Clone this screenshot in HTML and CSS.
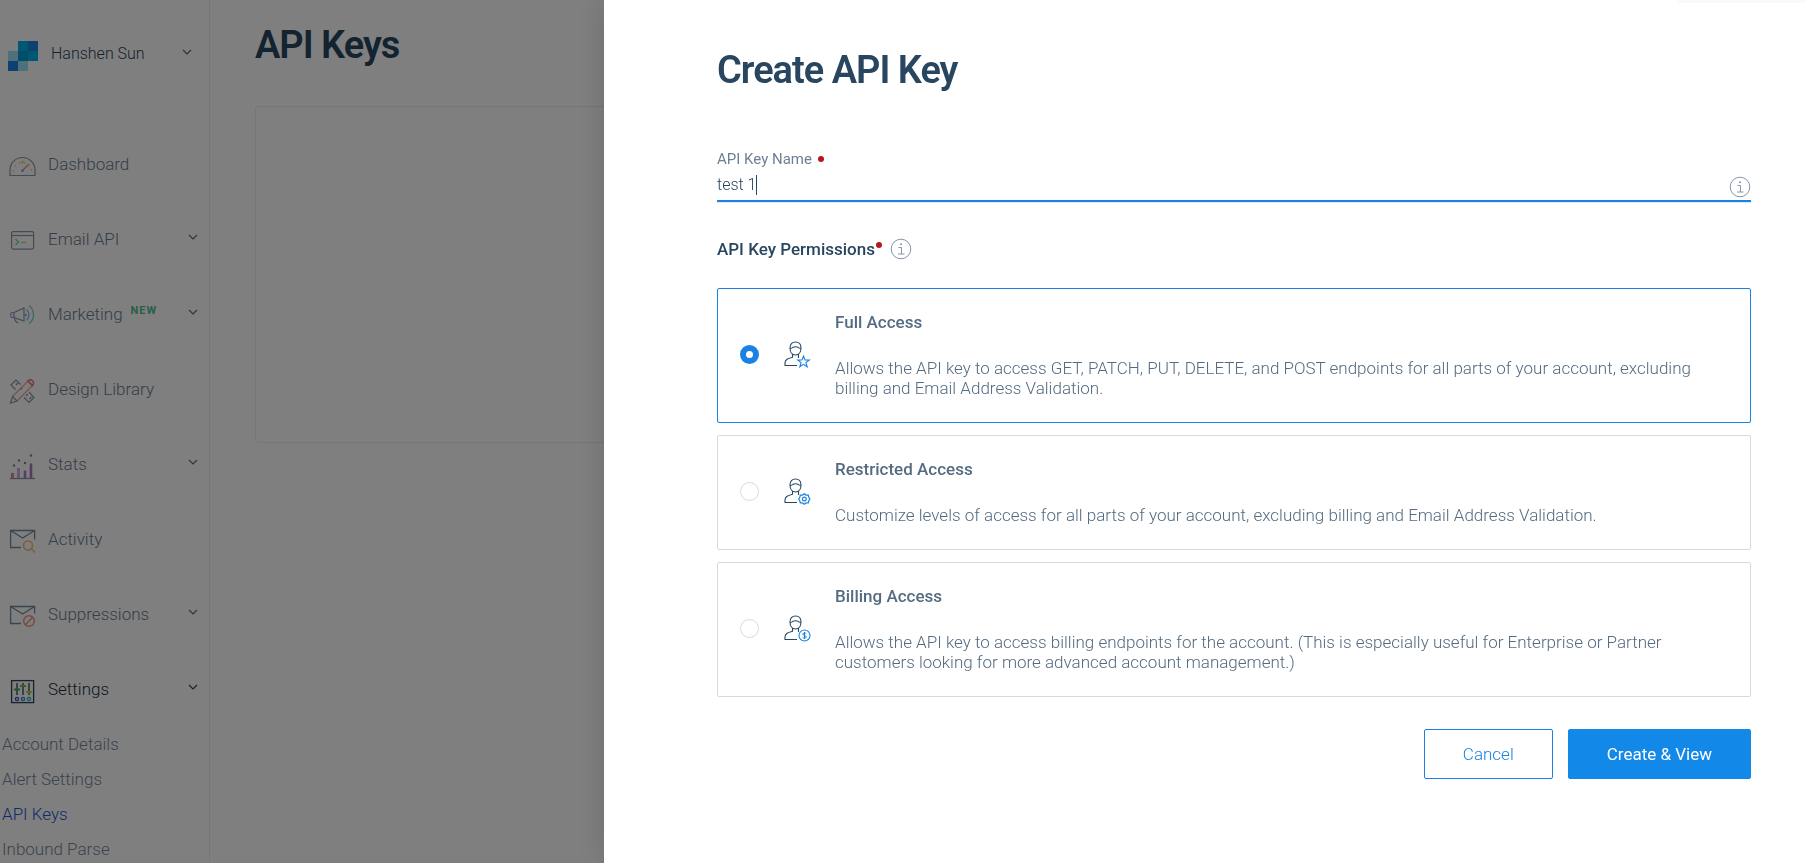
FILE: index.html
```html
<!DOCTYPE html>
<html lang="en">
<head>
<meta charset="utf-8">
<meta name="viewport" content="width=device-width, initial-scale=1">
<title>API Keys</title>
<link rel="stylesheet" href="styles.css">
</head>
<body>
<svg class="defs" width="0" height="0" aria-hidden="true">
  <symbol id="chevron" viewBox="0 0 10 6"><path d="M1 1l4 4 4-4" fill="none" stroke="currentColor" stroke-width="1.200"/></symbol>
  <symbol id="info" viewBox="0 0 22 22"><g fill="none" stroke="currentColor"><circle cx="11" cy="11" r="9.800"/><path d="M8.500 9.500h3v6.500M8 16h6.500"/></g><rect x="10" y="5.500" width="2" height="1.500" fill="currentColor"/></symbol>
  <symbol id="user" viewBox="0 0 27 27"><g fill="none" stroke="#294661" stroke-width="1.100"><path d="M6 7c0-3.800 2-6 5.500-6S17 3.200 17 7s-2 7-5.500 7S6 10.800 6 7z"/><path d="M6 7.500c1.500 0 2.500-.5 3-1.200 1.500-.6 3.500-.6 5 0 .5.7 1.500 1.200 3 1.200"/><path d="M8.500 13v3.200c-4.500 1.300-7.500 2.300-7.500 5.800v2.500h12M14.500 13v4"/></g></symbol>
</svg>

<div class="app">
  <nav class="sidebar" aria-label="Main">
    <button class="account" type="button">
      <svg class="logo" viewBox="0 0 30 30" aria-hidden="true"><path fill="#9de1f3" d="M0 10h10v10H0zM10 20h10v10H10z"/><path fill="#1a82e2" d="M0 20h10v10H0zM20 0h10v10H20z"/><path fill="#00b2e3" d="M10 0h10v10H10zM20 10h10v10H20z"/><path fill="#009dd9" d="M10 10h10v10H10z"/></svg>
      <span class="account-name">Hanshen Sun</span>
      <svg class="chevron"><use href="#chevron"/></svg>
    </button>
    <ul class="menu">
      <li><a class="item" href="#dashboard">
        <svg class="icon" viewBox="0 0 28 28"><g fill="none" stroke="#546b81" stroke-width="1.200"><path d="M2 23.500V18a12.500 12.500 0 0 1 25 0v5.500z"/><path stroke="#e8614f" d="M15 18l6-6"/><path stroke="#e8b339" stroke-width="1.500" stroke-dasharray="1.500 3.600" d="M5.500 19.500a9 9 0 1 1 18 0"/></g><circle cx="14.500" cy="18.500" r="1.500" fill="#4a90e2"/><circle cx="14.500" cy="10" r="1.200" fill="#e8b339"/></svg>
        <span class="item-label">Dashboard</span></a></li>
      <li><a class="item" href="#email-api">
        <svg class="icon" viewBox="0 0 28 28"><g fill="none" stroke="#546b81" stroke-width="1.200"><rect x="3.600" y="4.600" width="22" height="17.500" rx="1.500"/><path d="M3.600 8.500h22"/><path stroke="#3dc47e" stroke-width="1.400" d="M7.500 12l3 3-3 3"/><path stroke="#a5c43d" d="M13 15.500h5"/></g></svg>
        <span class="item-label">Email API</span><svg class="chevron"><use href="#chevron"/></svg></a></li>
      <li><a class="item" href="#marketing">
        <svg class="icon" viewBox="0 0 28 28"><g fill="none" stroke="#546b81" stroke-width="1.200"><path d="M6 10.500l10-4.500v13L6 15.500z"/><path stroke="#6a6ab5" d="M6 10.500H4c-1.700 0-1.700 5 0 5h2M6.500 15.500c0 3 1 4.500 4 5.500"/><path stroke="#3ba0dc" stroke-width="1.300" d="M18.500 7.500c3.300 2.500 3.300 8 0 11"/><path stroke="#3dc47e" stroke-width="1.300" d="M21 3.500c6 4.500 6 14 0 18"/></g><circle cx="17.800" cy="13" r="1.300" fill="#3ba0dc"/></svg>
        <span class="item-label">Marketing</span><span class="tag">NEW</span><svg class="chevron"><use href="#chevron"/></svg></a></li>
      <li><a class="item" href="#design-library">
        <svg class="icon" viewBox="0 0 28 28"><g fill="none" stroke="#546b81" stroke-width="1.200" transform="translate(0 -1)"><path d="M12.500 8.500L8 4 3 9l4.500 4.500M8 9l2-2M12.500 13.500l2-2M16 21.500l5 5 5-5-5-5.500M20 18l-2 2M23.500 21l-2 2"/><path d="M4.500 20.500l-2 6.500 6.500-2z"/><path stroke="#f0795a" d="M4.500 20.500L20 5l4.500 4.500L9 25"/><path stroke="#d8474f" stroke-width="1.600" d="M20 5c2-3.500 8 1 4.500 4.500z"/></g></svg>
        <span class="item-label">Design Library</span></a></li>
      <li><a class="item" href="#stats">
        <svg class="icon" viewBox="0 0 28 28"><path d="M2 26.500h25" stroke="#546b81" stroke-width="1.300"/><path stroke-width="3" d="M4.500 26v-5" stroke="#e0507c"/><path stroke-width="3" d="M10.500 26v-10" stroke="#c78bd0"/><path stroke-width="2.600" d="M17 26v-7.500" stroke="#7a4fd8"/><path stroke-width="2.600" d="M23 26V11.500" stroke="#8e3ba8"/><g fill="#3a516a"><circle cx="6" cy="13.500" r="1.200"/><circle cx="11" cy="8.500" r="1.200"/><circle cx="17" cy="11" r="1.200"/><circle cx="23" cy="3.500" r="1.200"/></g></svg>
        <span class="item-label">Stats</span><svg class="chevron"><use href="#chevron"/></svg></a></li>
      <li><a class="item" href="#activity">
        <svg class="icon" viewBox="0 0 28 28"><g fill="none" stroke="#3a5a78" stroke-width="1.300"><path d="M13 20.500H2.600v-17h24v9M2.600 3.500l12 7.500 12-7.500"/><g stroke="#e8a429" stroke-width="1.500"><circle cx="20" cy="18.500" r="4.500"/><path d="M23.300 21.800l3.700 3.700"/></g></g></svg>
        <span class="item-label">Activity</span></a></li>
      <li><a class="item" href="#suppressions">
        <svg class="icon" viewBox="0 0 28 28"><g fill="none" stroke="#3a5a78" stroke-width="1.300"><path d="M13 21.500H2.600v-17h24v7M2.600 4.500l12 7.500 12-7.500"/><g stroke="#ee6a4c" stroke-width="1.500"><circle cx="21" cy="19" r="5.300"/><path d="M17.300 22.700l7.400-7.400"/></g></g></svg>
        <span class="item-label">Suppressions</span><svg class="chevron"><use href="#chevron"/></svg></a></li>
      <li><a class="item item-open" href="#settings">
        <svg class="icon" viewBox="0 0 28 28"><g fill="none" stroke="#294661" stroke-width="1.300"><rect x="3.600" y="3.600" width="22" height="22"/><path d="M9 6v12M15 6v12M21 6v12"/><path stroke="#3fae52" stroke-width="2" d="M6 12.500h6"/><path stroke="#86b93c" stroke-width="2" d="M12 9h6"/><path stroke="#c9cf3e" stroke-width="2" d="M18 15h6"/><circle cx="9" cy="22" r="1.600" stroke="#4a4fb5"/><circle cx="15" cy="22" r="1.600" stroke="#3a7fd0"/><circle cx="21" cy="22" r="1.600" stroke="#26b6cf"/></g></svg>
        <span class="item-label">Settings</span><svg class="chevron"><use href="#chevron"/></svg></a>
        <ul class="submenu">
          <li><a href="#account-details">Account Details</a></li>
          <li><a href="#alert-settings">Alert Settings</a></li>
          <li><a class="current" href="#api-keys" aria-current="page">API Keys</a></li>
          <li><a href="#inbound-parse">Inbound Parse</a></li>
        </ul></li>
    </ul>
  </nav>
  <main class="page">
    <h1 class="title">API Keys</h1>
    <div class="panel"></div>
  </main>
</div>

<div class="overlay"></div>

<section class="drawer" role="dialog" aria-labelledby="drawer-title">
  <span class="edge"></span>
  <form class="form">
    <h2 class="title" id="drawer-title">Create API Key</h2>
    <div class="field">
      <label class="field-label" for="key-name">API Key Name <span class="dot"></span></label>
      <div class="field-row">
        <input class="field-input" id="key-name" type="text" value="test 1"><span class="caret"></span>
        <svg class="info"><use href="#info"/></svg>
      </div>
    </div>
    <fieldset class="permissions">
      <legend class="legend">API Key Permissions<span class="dot dot-raised"></span><svg class="info"><use href="#info"/></svg></legend>
      <div class="options">
        <label class="option">
          <input class="radio" type="radio" name="permission" checked>
          <svg class="option-icon" viewBox="0 0 27 27"><use href="#user"/><path d="M19.500 15l1.500 4h4.300l-3.400 2.600 1.300 4.200-3.700-2.500-3.700 2.500 1.300-4.200-3.400-2.600H18z" fill="#fff" stroke="#1a82e2" stroke-width="1.100"/></svg>
          <span class="option-text"><strong>Full Access</strong><span>Allows the API key to access GET, PATCH, PUT, DELETE, and POST endpoints for all parts of your account, excluding billing and Email Address Validation.</span></span>
        </label>
        <label class="option">
          <input class="radio" type="radio" name="permission">
          <svg class="option-icon" viewBox="0 0 27 27"><use href="#user"/><g fill="#fff" stroke="#1a82e2" stroke-width="1.200"><path d="M20.300 15.800l1.700 1.300 2.300-.1.500 2.300 1.100 1.700-1.100 1.800-.5 2.200-2.300-.1-1.700 1.300-1.700-1.300-2.300.1-.5-2.200-1.100-1.800 1.100-1.700.5-2.300 2.300.1z"/><circle cx="20.300" cy="21" r="1.900"/></g></svg>
          <span class="option-text"><strong>Restricted Access</strong><span>Customize levels of access for all parts of your account, excluding billing and Email Address Validation.</span></span>
        </label>
        <label class="option">
          <input class="radio" type="radio" name="permission">
          <svg class="option-icon" viewBox="0 0 27 27"><use href="#user"/><g fill="#fff" stroke="#1a82e2" stroke-width="1.100"><circle cx="20.500" cy="20.500" r="5.500"/><path stroke-width="1" fill="none" d="M22.300 18.700c-.6-1-3.500-1-3.500.4 0 1.700 3.500 1 3.500 2.800 0 1.400-3 1.500-3.700.4M20.500 17v7"/></g></svg>
          <span class="option-text"><strong>Billing Access</strong><span>Allows the API key to access billing endpoints for the account. (This is especially useful for Enterprise or Partner customers looking for more advanced account management.)</span></span>
        </label>
      </div>
    </fieldset>
    <div class="actions">
      <button class="btn btn-cancel" type="button">Cancel</button>
      <button class="btn btn-primary" type="submit">Create &amp; View</button>
    </div>
  </form>
</section>
</body>
</html>
```
FILE: styles.css
```css
* { box-sizing: border-box; }
body {
  margin: 0;
  height: 100vh;
  overflow: hidden;
  background: #fff;
  color: #294661;
  font: 16px/20px Roboto, "Liberation Sans", sans-serif;
}
ul { list-style: none; margin: 0; padding: 0; }
a { color: inherit; text-decoration: none; }
button, input { font: inherit; }
.defs { position: absolute; }

.app { display: flex; height: 100vh; overflow: hidden; }
.sidebar { flex: none; width: 210px; border-right: 1px solid #eceef1; font-weight: 300; }
.account {
  display: flex;
  align-items: center;
  width: 100%;
  height: 112px;
  padding: 0 17px 0 8px;
  border: 0;
  background: none;
  color: #294661;
  text-align: left;
}
.logo { width: 30px; height: 30px; }
.account-name { margin: 0 0 4px 13px; }
.chevron { width: 10px; height: 6px; margin: 0 0 8px auto; color: #546b81; }
.menu { padding-top: 16px; }
.item {
  display: flex;
  align-items: center;
  height: 75px;
  padding: 0 11px 0 8px;
  color: #6a7d93;
  font-size: 17px;
}
.item-label { margin-bottom: 4px; }
.icon { width: 28px; height: 28px; margin-right: 12px; opacity: .7; }
.item-open { color: #1b2f45; }
.item-open .icon { opacity: 1; }
.item-open .chevron { color: #294661; }
.tag { margin: 0 0 10px 8px; color: #4fc08c; font-size: 11px; font-weight: 700; letter-spacing: 1px; }
.submenu { margin-top: -1px; padding: 0 2px; color: #76879a; font-size: 17px; line-height: 35px; }
.current { color: #1a56d6; }

.page { flex: 1; padding: 24px 45px; }
.title { margin: 0; font-size: 38px; line-height: 42px; font-weight: 600; color: #294661; letter-spacing: -1px; }
.panel { height: 337px; margin-top: 40px; border: 1px solid #e9ecef; border-radius: 3px; }

.overlay { position: fixed; inset: 0; background: rgba(0, 0, 0, .5); }
.drawer {
  position: fixed;
  inset: 0 0 0 604px;
  background: #fff;
  box-shadow: 0 0 30px rgba(0, 0, 0, .15);
}
.edge { position: absolute; top: 0; right: 0; width: 128px; height: 3px; background: #fafafa; border-bottom-left-radius: 3px; }
.form { padding: 49px 54px 0 113px; }
.field { margin-top: 58px; }
.field-label { display: flex; align-items: center; gap: 6px; color: #6d8196; font-size: 15px; }
.dot { width: 6px; height: 6px; border-radius: 50%; background: #b8151b; }
.field-row {
  display: flex;
  align-items: center;
  height: 33px;
  border-bottom: 2px solid #1a82e2;
  box-shadow: 0 1px 0 #dbe9f8;
}
.field-input {
  field-sizing: content;
  padding: 0;
  border: 0;
  outline: 0;
  background: none;
  color: #294661;
  font-weight: 300;
  line-height: 20px;
}
.caret { width: 1px; height: 20px; background: #294661; }
.info { width: 22px; height: 22px; color: #8496aa; }
.field-row .info { margin: 4px 0 0 auto; }

.permissions { margin: 36px 0 0; padding: 0; border: 0; min-width: 0; }
.legend { display: flex; align-items: center; height: 22px; padding: 0; font-size: 17px; font-weight: 500; }
.dot-raised { margin: 0 8px 8px 1px; }
.options { display: flex; flex-direction: column; gap: 12px; padding-top: 28px; }
.option {
  display: flex;
  align-items: center;
  padding: 23px 22px;
  border: 1px solid #d5dae1;
  border-radius: 2px;
  color: #546b81;
  font-size: 17px;
  font-weight: 300;
}
.option:has(:checked) { border-color: #1a82e2; }
.radio {
  flex: none;
  appearance: none;
  width: 19px;
  height: 19px;
  margin: 0 25px 2px 0;
  border: 1px solid #d5dae1;
  border-radius: 50%;
  background: #fff;
}
.radio:checked { border: 6px solid #1a82e2; }
.option-icon { flex: none; width: 27px; height: 27px; margin: 0 24px 2px 0; }
.option-text { display: grid; gap: 26px; padding-bottom: 1px; }
.option-text strong { font-weight: 500; }

.actions { display: flex; justify-content: flex-end; gap: 15px; margin-top: 32px; }
.btn { height: 50px; padding: 0 38px; border: 1px solid #1a82e2; border-radius: 2px; font-size: 17px; }
.btn-cancel { background: #fff; color: #1a82e2; font-weight: 300; }
.btn-primary { background: #1288e8; border-color: #1288e8; color: #fff; font-weight: 400; }
```
